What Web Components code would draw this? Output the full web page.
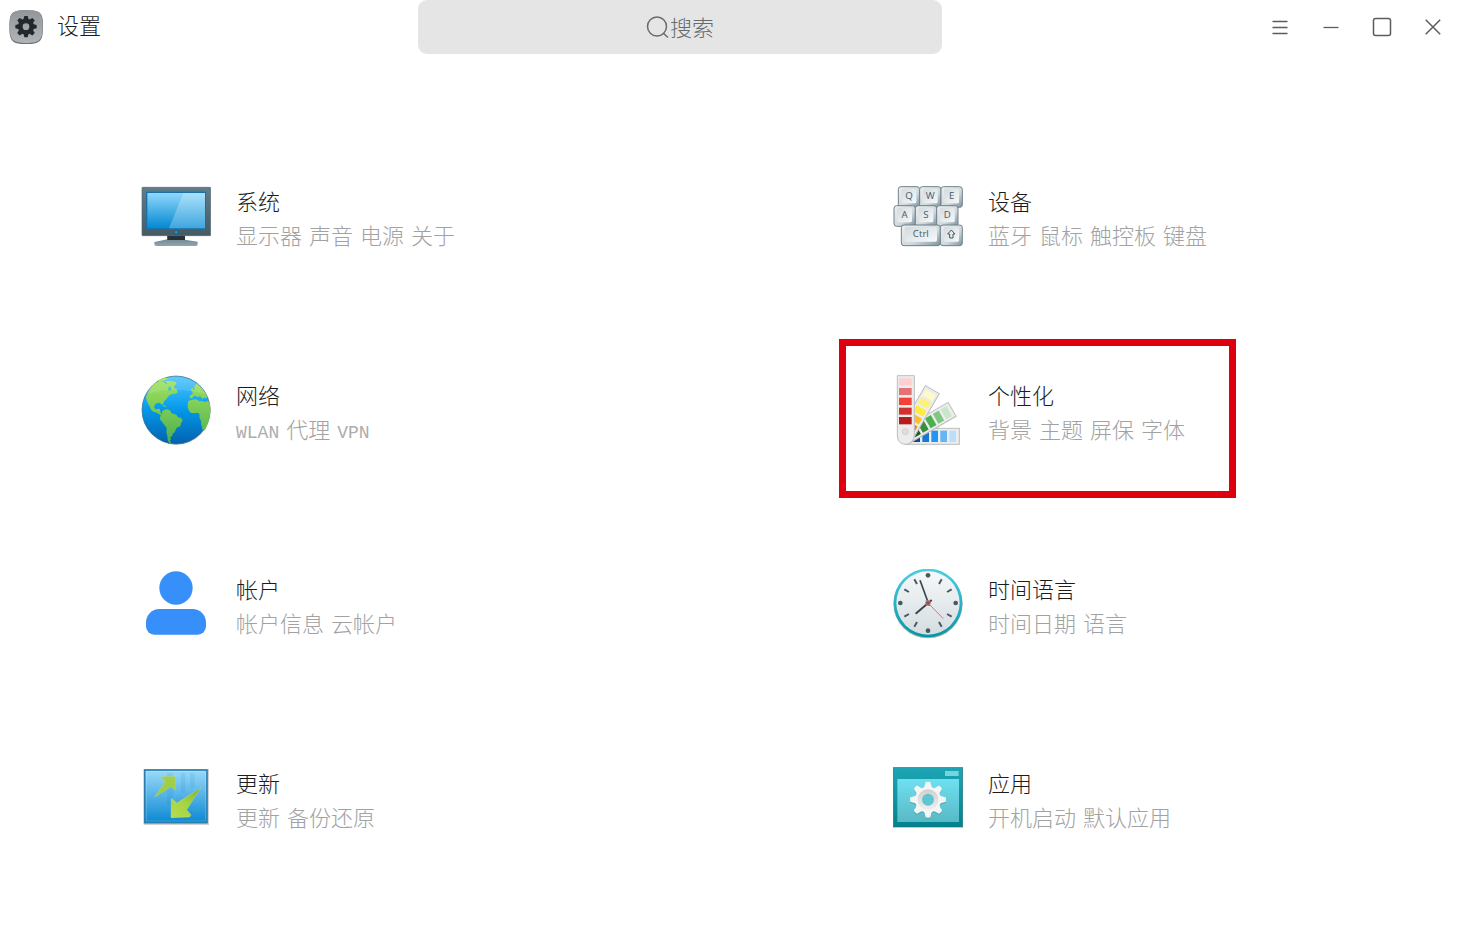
<!DOCTYPE html>
<html lang="zh-CN">
<head>
<meta charset="utf-8">
<title>设置</title>
<style>
  body {
    margin: 0;
    background: #fff;
    font-family: "DejaVu Sans", "Noto Sans CJK SC", sans-serif;
    font-weight: 300;
    font-size: 22px;
    line-height: 34px;
    color: #1c1c1c;
  }

  /* Latin words inside the Chinese descriptions */
  .latin {
    font-family: "Liberation Mono", monospace;
    font-size: 18px;
    color: #adadad;
  }
</style>
</head>
<body>
<settings-header>设置</settings-header>
<settings-grid>
  <settings-card icon="system" href="#system">系统<span slot="info">显示器 声音 电源 关于</span></settings-card>
  <settings-card icon="devices" href="#devices">设备<span slot="info">蓝牙 鼠标 触控板 键盘</span></settings-card>
  <settings-card icon="network" href="#network">网络<span slot="info"><span class="latin">WLAN</span> 代理 <span class="latin">VPN</span></span></settings-card>
  <settings-card icon="personal" href="#personal" highlighted>个性化<span slot="info">背景 主题 屏保 字体</span></settings-card>
  <settings-card icon="account" href="#account">帐户<span slot="info">帐户信息 云帐户</span></settings-card>
  <settings-card icon="time" href="#time">时间语言<span slot="info">时间日期 语言</span></settings-card>
  <settings-card icon="update" href="#update">更新<span slot="info">更新 备份还原</span></settings-card>
  <settings-card icon="apps" href="#apps">应用<span slot="info">开机启动 默认应用</span></settings-card>
</settings-grid>

<script>
// Repeat a shape around a centre, once for each angle
function around(angles, cx, cy, shape) {
  return angles.map(a => `<g transform="translate(${cx} ${cy}) rotate(${a})">${shape}</g>`).join('');
}

const eighths = [0, 45, 90, 135, 180, 225, 270, 315];

// One keycap of the keyboard icon
function keycap(x, y, w, label) {
  return `
    <rect x="${x}" y="${y}" width="${w}" height="62" rx="8" fill="url(#cap)" stroke="#71818a" stroke-width="3"/>
    <rect x="${x + 10}" y="${y + 6}" width="${w - 20}" height="44" rx="5" fill="url(#face)"/>
    <text x="${x + w / 2}" y="${y + 37}" text-anchor="middle">${label}</text>`;
}

// A strip of the colour fan, standing on its pivot
function strip(angle, colors) {
  const ys = [-152, -125, -98, -71, -44];
  return `
    <g transform="translate(226 304) rotate(${angle})">
      <rect x="-24" y="-162" width="48" height="162" fill="#ececec" stroke="#bdbdbd" stroke-width="3"/>
      ${colors.map((c, i) => `<rect x="-17" y="${ys[i]}" width="34" height="20" fill="${c}"/>`).join('')}
    </g>`;
}

const icons = {
  system: {
    box: '33 18 210 210',
    art: `
      <defs>
        <linearGradient id="frame" x2="0" y2="1"><stop stop-color="#607d8b"/><stop offset="1" stop-color="#455a64"/></linearGradient>
        <linearGradient id="screen" x2="0" y2="1"><stop stop-color="#8fd8fb"/><stop offset="1" stop-color="#0288d1"/></linearGradient>
        <linearGradient id="foot" x2="0" y2="1"><stop stop-color="#607d8b"/><stop offset="1" stop-color="#90a4ae"/></linearGradient>
      </defs>
      <path d="M112 182h53v12l38 6v8q0 5-6 5H80q-7 0-7-6v-6l39-8z" fill="url(#foot)"/>
      <path d="M112 181h53v14h-53z" fill="#263238"/>
      <rect x="36" y="37" width="206" height="145" rx="2" fill="url(#frame)" stroke="#52666f" stroke-width="2"/>
      <rect x="48" y="50" width="180" height="114" fill="#1b6fa5"/>
      <rect x="52" y="54" width="173" height="106" fill="url(#screen)"/>
      <path d="M160 54h65v106H117z" fill="#fff" opacity=".25"/>
      <rect x="134" y="167" width="9" height="9" rx="3" fill="#03a9f4" stroke="#01579b" stroke-width="2"/>`
  },
  devices: {
    box: '39 18 210 210',
    art: `
      <defs>
        <linearGradient id="cap" x2="1" y2="1"><stop stop-color="#eceff1"/><stop offset=".6" stop-color="#cfd8dc"/><stop offset="1" stop-color="#78909c"/></linearGradient>
        <linearGradient id="face" x2="1" y2="1"><stop stop-color="#d3dadd"/><stop offset="1" stop-color="#f7f9fa"/></linearGradient>
      </defs>
      <g font-family="Open Sans, sans-serif" font-size="29" font-weight="400" fill="#455a64">
        ${keycap(55, 35, 64, 'Q')}${keycap(119, 35, 64, 'W')}${keycap(183, 35, 64, 'E')}
        ${keycap(42, 92, 64, 'A')}${keycap(106, 92, 64, 'S')}${keycap(170, 92, 64, 'D')}
        ${keycap(64, 150, 117, 'Ctrl')}${keycap(181, 150, 66, '')}
      </g>
      <path d="M214 165l11 12h-6v12h-10v-12h-6z" fill="none" stroke="#455a64" stroke-width="3"/>`
  },
  network: {
    box: '33 30 210 210',
    art: `
      <defs>
        <linearGradient id="sea" x2="0" y2="1"><stop stop-color="#4fc3f7"/><stop offset=".25" stop-color="#29b0f6"/><stop offset=".5" stop-color="#0398e8"/><stop offset="1" stop-color="#0261ae"/></linearGradient>
        <linearGradient id="land" gradientUnits="userSpaceOnUse" x1="0" y1="30" x2="0" y2="235"><stop stop-color="#a5e65c"/><stop offset="1" stop-color="#4caf50"/></linearGradient>
      </defs>
      <circle cx="139" cy="136" r="103" fill="#000" opacity=".3"/>
      <circle cx="138" cy="135" r="102" fill="url(#sea)" stroke="#3b6f94" stroke-width="2"/>
      <g fill="url(#land)">
        <path d="M76 54l14-7 11 4 7 6 8-1 3 8-6 7 4 6 8-2 6-8 8 7 5 7-8 5-11 1-9 6-6 8-7 7-3 8-6 2-5-5-8 1-5 4-4 7 4 8 8-2 6 1 1 8 3 8 8 2-7 2-10-6-8-4-7-2-8-7-3-10-5-7-4-10-2-10 9-19 9-15z"/>
        <path d="M106 49l12-2 20 4 1 6-5 4-3 11-6 3-2-9-9-6zM129 75l11-4 1 10-8 3zM82 47l20-9 12 2-6 5-14 4zM92 116l14 6 5 5-10-3z"/>
        <path d="M96 140l7-6 10-1 8 4 3 7 8 3 8 3 3 6 10 3 5 7-5 9-2 9-9 3-5 7-3 8-6 4-1 7-6 3 2 6-3 5 5 9-7-2-5-9-1-12-3-12 1-12-6-8-7-9-7-9 1-10 5-5z"/>
        <path d="M174 109l9-4 12-2 8 1 4 5 10-1 8 3 8-3 5 3 3 17 0 14-4 23-9 24-6 9-4-3-4-14-1-13-5-11 1-9-6-5-12 2-9-2-6-7-3-9z"/>
        <path d="M179 100l1-9 8-3-1-10 7-4-1-11 7-7 6 4 8 9 8 10 7 10 4 10-9-1-8 3-3-6-6-1-5 3-5-5-6 1-4 7zM183 72l5-3 3 8-6 2z"/>
      </g>
      <path d="M48 88Q72 38 138 35q66 3 90 53-90-26-180 0z" fill="#fff" opacity=".12"/>`
  },
  personal: {
    box: '189 120 210 210',
    art: `
      ${strip(90, ['#bbdefb', '#64b5f6', '#2196f3', '#1976d2', '#0d47a1'])}
      ${strip(60, ['#c8e6c9', '#81c784', '#4caf50', '#388e3c', '#1b5e20'])}
      ${strip(30, ['#fff9c4', '#fff176', '#ffeb3b', '#fbc02d', '#f57f17'])}
      <path d="M202 122h51v178a26 28 0 0 1-26 28q-25-1-25-28z" fill="#ececec" stroke="#bdbdbd" stroke-width="3"/>
      <path d="M207 130h38v21h-38z" fill="#ffcdd2"/>
      <path d="M207 159h38v21h-38z" fill="#e57373"/>
      <path d="M207 188h38v22h-38z" fill="#f44336"/>
      <path d="M207 218h38v21h-38z" fill="#d32f2f"/>
      <path d="M207 246h38v22h-38z" fill="#b71c1c"/>
      <circle cx="226" cy="290" r="9" fill="#dedede" stroke="#c4c4c4" stroke-width="2"/>`
  },
  account: {
    box: '33 27 210 210',
    art: `
      <g fill="#3790fa">
        <circle cx="138" cy="84" r="50"/>
        <path d="M88 147h100a40 40 0 0 1 40 40v12a25 25 0 0 1-25 25H73a25 25 0 0 1-25-25v-12a40 40 0 0 1 40-40z"/>
      </g>`
  },
  time: {
    box: '39 27 210 210',
    art: `
      <defs>
        <linearGradient id="rim" x2="0" y2="1"><stop stop-color="#4dd0e1"/><stop offset="1" stop-color="#0097a7"/></linearGradient>
        <linearGradient id="dial" x2="0" y2="1"><stop stop-color="#f6f8f9"/><stop offset="1" stop-color="#d5dde0"/></linearGradient>
      </defs>
      <circle cx="144" cy="131" r="104" fill="#000" opacity=".3"/>
      <circle cx="144" cy="129" r="103" fill="url(#rim)"/>
      <circle cx="144" cy="129" r="95" fill="url(#dial)"/>
      ${around([30, 60, 120, 150, 210, 240, 300, 330], 144, 129, '<path d="M0-66v-16" stroke="#455a64" stroke-width="6"/>')}
      ${around([0, 90, 180, 270], 144, 129, '<circle cy="-83" r="7" fill="#455a64"/>')}
      <path d="M107 161l48-41" stroke="#37474f" stroke-width="6"/>
      <path d="M120 61l28 76" stroke="#37474f" stroke-width="5"/>
      <path d="M137 122l53 54" stroke="#e57368" stroke-width="3"/>
      <circle cx="144" cy="129" r="7" fill="#6d5a60" stroke="#e57368" stroke-width="3"/>`
  },
  update: {
    box: '33 9 210 210',
    art: `
      <defs>
        <linearGradient id="pane" x2="0" y2="1"><stop stop-color="#9bdafa"/><stop offset="1" stop-color="#0a88d2"/></linearGradient>
        <linearGradient id="small" x2="0" y2="1"><stop stop-color="#a3cf4c"/><stop offset="1" stop-color="#9ccc3c"/></linearGradient>
        <linearGradient id="big" x1="1" x2="0" y2="1"><stop stop-color="#7cb030"/><stop offset=".5" stop-color="#a4d443"/><stop offset="1" stop-color="#b8dc4e"/></linearGradient>
      </defs>
      <rect x="41" y="27" width="196" height="168" fill="#000" opacity=".18"/>
      <rect x="44" y="30" width="187" height="158" fill="url(#pane)" stroke="#2b7fb0" stroke-width="5"/>
      <rect x="49" y="35" width="177" height="148" fill="none" stroke="#fff" stroke-width="2" opacity=".25"/>
      <path d="M111 38h18v98h-18zM152 38h14v60h-14zM180 38h14v45h-14z" fill="#0277bd" opacity=".1"/>
      <path d="M93 50l43-1v40l-14-9-49 32 32-47z" fill="url(#small)" stroke="#c3df78" stroke-width="1"/>
      <path d="M124 115l17 14 71-45-42 65 13 16-4 6-56 2z" fill="url(#big)" stroke="#d1e87a" stroke-width="1"/>`
  },
  apps: {
    box: '39 9 210 210',
    art: `
      <defs>
        <linearGradient id="window" x2="0" y2="1"><stop stop-color="#1ea5b4"/><stop offset="1" stop-color="#00838f"/></linearGradient>
        <linearGradient id="view" x2="0" y2="1"><stop stop-color="#6ee0f0"/><stop offset="1" stop-color="#58b9c5"/></linearGradient>
        <linearGradient id="ring" x2="0" y2="1"><stop stop-color="#d0d0d0"/><stop offset="1" stop-color="#eee"/></linearGradient>
      </defs>
      <rect x="40" y="23" width="208" height="178" fill="url(#window)" stroke="#24717b" stroke-width="2"/>
      <rect x="195" y="33" width="41" height="15" fill="#74d5e0"/>
      <rect x="52" y="57" width="185" height="129" fill="url(#view)"/>
      ${around(eighths, 144, 122, '<path d="M-15-34q6-4 7-16q1-4 4-4h8q3 0 4 4q1 12 7 16z" fill="#43a3ae"/>')}
      ${around(eighths, 144, 119, '<path d="M-15-34q6-4 7-16q1-4 4-4h8q3 0 4 4q1 12 7 16z" fill="#f5f5f5"/>')}
      <circle cx="144" cy="119" r="38" fill="#f5f5f5"/>
      <circle cx="144" cy="119" r="31" fill="url(#ring)"/>
      <circle cx="144" cy="119" r="18" fill="#5fc5d1"/>`
  },
  logo: {
    box: '27 29 105 105',
    art: `
      <defs><linearGradient id="plate" x2="0" y2="1"><stop stop-color="#92969a"/><stop offset="1" stop-color="#b1b4b7"/></linearGradient></defs>
      <path d="M79 30c43 0 50 7 50 49s-7 52-50 52-51-9-51-52 8-49 51-49z" fill="#6f7275"/>
      <path d="M79 30c42 0 49 8 49 48s-8 50-49 50-50-9-50-50 8-48 50-48z" fill="url(#plate)"/>
      ${around(eighths, 78, 79, '<path d="M-8-20l3-12h10l3 12z" fill="#22292d"/>')}
      <circle cx="78" cy="79" r="17" fill="none" stroke="#22292d" stroke-width="14"/>`
  }
};

// Picture chosen by its name attribute
class SettingsIcon extends HTMLElement {
  constructor() {
    super();
    this.attachShadow({ mode: 'open' });
  }

  connectedCallback() {
    const icon = icons[this.getAttribute('name')];
    this.shadowRoot.innerHTML = `
      <style>
        :host {
          display: block;
          flex: none;
        }

        svg {
          display: block;
          width: 100%;
          height: 100%;
        }
      </style>
      <svg viewBox="${icon.box}" aria-hidden="true">${icon.art}</svg>
    `;
  }
}

// Title, search box and window buttons
class SettingsHeader extends HTMLElement {
  constructor() {
    super();
    this.attachShadow({ mode: 'open' });
  }

  connectedCallback() {
    this.shadowRoot.innerHTML = `
      <style>
        :host {
          display: block;
        }

        header {
          display: grid;
          grid-template-columns: 418fr 524fr 515fr;
          min-height: 54px;
        }

        .brand {
          display: flex;
          align-items: center;
          gap: 13px;
          padding-left: 9px;
        }

        .brand settings-icon {
          width: 35px;
          height: 35px;
        }

        h1 {
          margin: 0;
          font: inherit;
        }

        .search {
          display: flex;
          align-items: center;
          justify-content: center;
          background: #e5e5e5;
          border-radius: 9px;
          color: #666b6d;
        }

        .search svg {
          width: 24px;
          height: 24px;
        }

        input {
          field-sizing: content;
          padding: 0;
          border: 0;
          outline: 0;
          background: none;
          font: inherit;
          color: inherit;
        }

        input::placeholder {
          color: inherit;
          opacity: 1;
        }

        .controls {
          display: flex;
          align-items: center;
          justify-content: flex-end;
          gap: 3px;
        }

        button {
          display: grid;
          place-items: center;
          width: 48px;
          height: 48px;
          padding: 0;
          border: 0;
          background: none;
          color: #5c5c5c;
        }

        svg {
          fill: none;
          stroke: currentColor;
        }
      </style>

      <header>
        <div class="brand">
          <settings-icon name="logo"></settings-icon>
          <h1><slot></slot></h1>
        </div>
        <label class="search">
          <svg viewBox="0 0 24 24" stroke-width="1.5" aria-hidden="true"><circle cx="11" cy="11.5" r="9.5"/><path d="M17 18l5 4.5"/></svg>
          <input type="text" placeholder="搜索" aria-label="搜索">
        </label>
        <div class="controls">
          <button type="button" aria-label="菜单">
            <svg width="20" height="20" stroke-width="1.3"><path d="M2.500 4.500h15M2.500 10.500h15M2.500 16.500h15"/></svg>
          </button>
          <button type="button" aria-label="最小化">
            <svg width="20" height="20" stroke-width="1.3"><path d="M2.500 10.500h15"/></svg>
          </button>
          <button type="button" aria-label="最大化">
            <svg width="20" height="20" stroke-width="1.5"><rect x="1.500" y="1.500" width="17" height="17" rx="2"/></svg>
          </button>
          <button type="button" aria-label="关闭">
            <svg width="20" height="20" stroke-width="1.5"><path d="M2.700 2.700l14.500 14.500M17.200 2.700L2.700 17.200"/></svg>
          </button>
        </div>
      </header>
    `;
  }
}

// Two columns of cards
class SettingsGrid extends HTMLElement {
  constructor() {
    super();
    this.attachShadow({ mode: 'open' });
  }

  connectedCallback() {
    this.shadowRoot.innerHTML = `
      <style>
        :host {
          display: block;
        }

        main {
          display: grid;
          grid-template-columns: 752fr 618fr;
          row-gap: 35px;
          padding: 91px 0 40px 87px;
        }
      </style>
      <main><slot></slot></main>
    `;
  }
}

// Link with an icon, a title and a line of details
class SettingsCard extends HTMLElement {
  constructor() {
    super();
    this.attachShadow({ mode: 'open' });
  }

  connectedCallback() {
    this.shadowRoot.innerHTML = `
      <style>
        :host {
          display: block;
          width: 397px;
          max-width: 100%;
        }

        a {
          display: flex;
          align-items: flex-start;
          gap: 25px;
          box-sizing: border-box;
          min-height: 159px;
          padding: 29px 0 0 47px;
          border: 7px solid transparent;
          color: inherit;
          text-decoration: none;
          white-space: nowrap;
        }

        :host([highlighted]) a {
          border-color: #df000f;
        }

        settings-icon {
          width: 70px;
          height: 70px;
        }

        .text {
          padding-top: 5px;
        }

        .title,
        .info {
          height: 34px;
        }

        .info {
          color: #a2a2a2;
        }
      </style>

      <a href="${this.getAttribute('href')}">
        <settings-icon name="${this.getAttribute('icon')}"></settings-icon>
        <div class="text">
          <div class="title"><slot></slot></div>
          <div class="info"><slot name="info"></slot></div>
        </div>
      </a>
    `;
  }
}

customElements.define('settings-icon', SettingsIcon);
customElements.define('settings-header', SettingsHeader);
customElements.define('settings-grid', SettingsGrid);
customElements.define('settings-card', SettingsCard);
</script>
</body>
</html>
